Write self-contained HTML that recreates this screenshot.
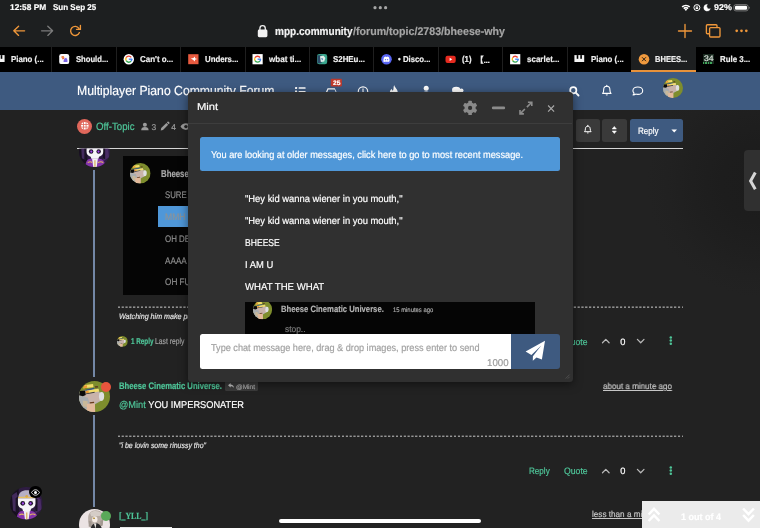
<!DOCTYPE html>
<html><head><meta charset="utf-8"><title>BHEESE WHY | Multiplayer Piano Community Forum</title>
<style>
*{box-sizing:border-box;margin:0;padding:0}
html,body{width:760px;height:528px;overflow:hidden;background:#222;font-family:"Liberation Sans",sans-serif;color:#fff}
.abs{position:absolute}
.t{position:absolute;white-space:nowrap;line-height:1;-webkit-text-stroke:.18px;transform-origin:0 0;text-rendering:geometricPrecision}
svg{position:absolute;overflow:visible}
#root{position:absolute;left:0;top:0;width:760px;height:528px;overflow:hidden;will-change:transform}
#chrome{left:0;top:0;width:760px;height:47px;background:#1d1f20}
#tabs{left:0;top:46.7px;width:760px;height:25px;background:#000}
.sep{position:absolute;top:46.7px;width:1px;height:25px;background:#1f1f1f}
#hdr{left:0;top:71.7px;width:760px;height:38.3px;background:#3e5a80}
#modal{left:187.6px;top:92.3px;width:385.2px;height:289.4px;background:#303030;border-radius:3.5px;box-shadow:0 2px 10px rgba(0,0,0,.5)}
.dash{position:absolute;height:1px;background:repeating-linear-gradient(90deg,#b4b4b4 0,#b4b4b4 1.5px,transparent 2.3px,transparent 3.3px,#b4b4b4 3.864px)}
.btn{position:absolute;top:118.6px;height:23.2px;border-radius:2.5px}
</style></head><body>
<div id="root">
<div class="abs" style="left:560px;top:72px;width:200px;height:300px;background:radial-gradient(circle at 202px 110px,#1c1c1c 0,#1d1d1d 40px,#1f1f1f 70px,#212121 95px,#222 115px)"></div>
<div class="abs" id="chrome"></div>
<div class="t" style="left:10.00px;top:3.00px;font-size:8.36px;color:#fff;font-weight:bold;">12:58 PM</div>
<div class="t" style="left:53.40px;top:3.00px;font-size:8.36px;color:#fff;font-weight:bold;transform:scaleX(0.9603);">Sun Sep 25</div>
<div class="t" style="left:713.80px;top:3.00px;font-size:8.36px;color:#fff;font-weight:bold;transform:scaleX(1.0657);">92%</div>
<svg style="left:0;top:0" width="760" height="47" viewBox="0 0 760 47">
<g fill="#a6a6a6"><circle cx="375" cy="7.7" r="1.6"/><circle cx="380.3" cy="7.7" r="1.6"/><circle cx="385.6" cy="7.7" r="1.6"/></g>
<!-- wifi -->
<g fill="none" stroke="#fff" stroke-width="1.5" stroke-linecap="butt">
<path d="M682.1 6.9 A5.6 5.6 0 0 1 689.7 6.9"/>
<path d="M683.7 8.6 A3.3 3.3 0 0 1 688.1 8.6"/>
</g><path d="M685.900 10.900l-1.300-1.400a1.800 1.800 0 0 1 2.600 0z" fill="#fff"/>
<!-- rotation lock -->
<circle cx="696.900" cy="7.600" r="3" fill="none" stroke="#fff" stroke-width="1"/>
<rect x="695.700" y="7.200" width="2.400" height="1.900" rx=".3" fill="#fff"/><path d="M696.200 7.300v-.700a.700.700 0 0 1 1.400 0v.700" fill="none" stroke="#fff" stroke-width=".6"/>
<!-- moon -->
<path d="M707.300 4.400a3.300 3.300 0 1 0 3 4.300a2.700 2.700 0 0 1-3-4.300z" fill="#fff" stroke="#fff" stroke-width=".5" stroke-linejoin="round"/>
<!-- battery -->
<rect x="733.900" y="4.600" width="14.200" height="6.300" rx="2" fill="none" stroke="#8b8b8b" stroke-width=".8"/>
<rect x="735" y="5.700" width="12" height="4.100" rx="1.100" fill="#fff"/>
<path d="M748.900 6.600v2.300c.6-.2.800-.6.800-1.150s-.2-.95-.8-1.150z" fill="#8b8b8b"/>
<!-- back / fwd / reload -->
<g fill="none" stroke="#ef973a" stroke-width="1.35" stroke-linecap="round" stroke-linejoin="round">
<path d="M24.6 30.8H13.9M18.6 26.2l-4.8 4.6 4.8 4.6"/>
<path d="M79.400 32.600A4.550 4.550 0 1 1 78.900 28.300M80.400 25.300V29.300H76.500" stroke-linejoin="miter"/>
<path d="M685 24.5v13M678.5 31h13"/>
<rect x="706.4" y="24.7" width="10.6" height="9" rx="1"/>
</g>
<rect x="709.6" y="27.6" width="10.4" height="9.4" rx="1" fill="#1d1f20" stroke="#ef973a" stroke-width="1.35"/>
<g fill="#ef973a"><circle cx="736.7" cy="30.8" r="1.35"/><circle cx="741.5" cy="30.8" r="1.35"/><circle cx="746.3" cy="30.8" r="1.35"/></g>
<path d="M41.6 30.8h10.9M47.8 26.2l4.8 4.6-4.8 4.6" fill="none" stroke="#7b7b7b" stroke-width="1.35" stroke-linecap="round" stroke-linejoin="round"/>
<!-- lock -->
<rect x="257.8" y="29.6" width="9.6" height="7.6" rx="1.4" fill="#f2f2f2"/>
<path d="M259.9 30v-1.6a2.7 2.7 0 0 1 5.4 0v1.6" fill="none" stroke="#f2f2f2" stroke-width="1.3"/>
</svg>
<div class="t" style="left:275.00px;top:27.00px;font-size:11.22px;color:#f3f3f3;font-weight:bold;transform:scaleX(0.8945);">mpp.community</div>
<div class="t" style="left:352.60px;top:27.00px;font-size:11.22px;color:#a5a5a5;font-weight:bold;transform:scaleX(0.9486);">/forum/topic/2783/bheese-why</div>
<div class="abs" id="tabs"></div>
<div class="abs" style="left:631.4px;top:46.7px;width:64.5px;height:25px;background:#1d1f20;border-bottom:2px solid #e8923a"></div>
<div class="sep" style="left:51.3px"></div><div class="sep" style="left:115.7px"></div><div class="sep" style="left:180.1px"></div><div class="sep" style="left:244.5px"></div><div class="sep" style="left:308.9px"></div><div class="sep" style="left:373.3px"></div><div class="sep" style="left:437.7px"></div><div class="sep" style="left:502.1px"></div><div class="sep" style="left:566.5px"></div>
<div class="t" style="left:11.40px;top:55.00px;font-size:8.57px;color:#f0f0f0;font-weight:bold;transform:scaleX(0.9191);">Piano (...</div>
<div class="t" style="left:75.80px;top:55.00px;font-size:8.57px;color:#f0f0f0;font-weight:bold;transform:scaleX(0.8933);">Should...</div>
<div class="t" style="left:140.20px;top:55.00px;font-size:8.57px;color:#f0f0f0;font-weight:bold;transform:scaleX(0.9271);">Can't o...</div>
<div class="t" style="left:204.60px;top:55.00px;font-size:8.57px;color:#f0f0f0;font-weight:bold;transform:scaleX(0.9143);">Unders...</div>
<div class="t" style="left:269.00px;top:55.00px;font-size:8.57px;color:#f0f0f0;font-weight:bold;transform:scaleX(0.9431);">wbat ti...</div>
<div class="t" style="left:333.40px;top:55.00px;font-size:8.57px;color:#f0f0f0;font-weight:bold;transform:scaleX(0.9209);">S2HEu...</div>
<div class="t" style="left:397.80px;top:55.00px;font-size:8.57px;color:#f0f0f0;font-weight:bold;transform:scaleX(0.9067);">• Disco...</div>
<div class="t" style="left:462.20px;top:55.00px;font-size:8.57px;color:#f0f0f0;font-weight:bold;transform:scaleX(0.9075);">(1)</div>
<div class="t" style="left:475.20px;top:56.00px;font-size:8.57px;color:#f0f0f0;font-weight:bold;font-family:'Liberation Sans','Noto Sans CJK JP',sans-serif;letter-spacing:-.3px;">【...</div>
<div class="t" style="left:526.60px;top:55.00px;font-size:8.57px;color:#f0f0f0;font-weight:bold;transform:scaleX(0.9353);">scarlet...</div>
<div class="t" style="left:591.00px;top:55.00px;font-size:8.57px;color:#f0f0f0;font-weight:bold;transform:scaleX(0.9191);">Piano (...</div>
<div class="t" style="left:655.40px;top:55.00px;font-size:8.57px;color:#f0f0f0;font-weight:bold;transform:scaleX(0.8815);">BHEES...</div>
<div class="t" style="left:719.80px;top:55.00px;font-size:8.57px;color:#f0f0f0;font-weight:bold;transform:scaleX(0.9195);">Rule 3...</div>
<svg style="left:0;top:0" width="760" height="72" viewBox="0 0 760 72">
<rect x="-5.2" y="55.100" width="9.800" height="6.900" fill="#f4f4f4"/><rect x="-2.9000000000000004" y="55.100" width="1.600" height="3.700" fill="#000"/><rect x="0.7000000000000002" y="55.100" width="1.600" height="3.700" fill="#000"/><rect x="574.4" y="55.100" width="9.800" height="6.900" fill="#f4f4f4"/><rect x="576.6999999999999" y="55.100" width="1.600" height="3.700" fill="#000"/><rect x="580.3" y="55.100" width="1.600" height="3.700" fill="#000"/><rect x="59.2" y="54.1" width="10" height="10" rx="2.2" fill="#fbfbfd"/><path d="M61.400000000000006 56.2l2.6 .2 .4 2.4-1.8 .6z" fill="#e2574c"/><path d="M63.5 61.9c0-2.4 1.2-4 2.6-4.2 1 .6 1.5 2.4 1.3 4.2z" fill="#7b63e6"/><circle cx="62.900000000000006" cy="57.2" r="1.2" fill="#f08a4a"/><circle cx="128.8" cy="59.2" r="5.2" fill="#fff"/><g fill="none" stroke-width="1.36"><path d="M131.27 57.47A3.02 3.02 0 0 0 126.19 57.69" stroke="#ea4335"/><path d="M126.19 57.69A3.02 3.02 0 0 0 126.19 60.71" stroke="#fbbc05"/><path d="M126.19 60.71A3.02 3.02 0 0 0 131.11 61.14" stroke="#34a853"/><path d="M131.11 61.14A3.02 3.02 0 0 0 131.81 59.09" stroke="#4285f4"/><path d="M128.80 59.20H132.27" stroke="#4285f4"/></g><rect x="188.20000000000002" y="54.2" width="10.3" height="10" fill="#e85a3f"/><path d="M190.8 58.6l2.6-.6 1.4-1.6 .3 1.9 2.1 .8-2.1 .7-.5 1.8-1.3-1.6z" fill="#fff"/><rect x="252.50000000000003" y="54.1" width="10.2" height="10.2" fill="#fff"/><g fill="none" stroke-width="1.33"><path d="M260.02 57.50A2.96 2.96 0 0 0 255.04 57.72" stroke="#ea4335"/><path d="M255.04 57.72A2.96 2.96 0 0 0 255.04 60.68" stroke="#fbbc05"/><path d="M255.04 60.68A2.96 2.96 0 0 0 259.87 61.10" stroke="#34a853"/><path d="M259.87 61.10A2.96 2.96 0 0 0 260.56 59.10" stroke="#4285f4"/><path d="M257.60 59.20H261.00" stroke="#4285f4"/></g><rect x="317.0" y="54.1" width="10.2" height="10.2" rx="2.3" fill="#3aa58d"/><rect x="317.4" y="55.2" width="4.3" height="8" rx="1" fill="#2c4a66"/><path d="M320.0 56.3l3.6-.6 1.8 2.4-1.2 3.4-3.4 .6z" fill="#dfeee8"/><path d="M321.0 58.2l2 .2-.6 2z" fill="#3b6fb0"/><circle cx="386.5" cy="59.2" r="5.3" fill="#5865f2"/><path d="M383.5 61.3c-.3-1.7 .2-3.3 .9-4.3 .7-.3 1.1-.4 1.6-.5l.2 .4h.6l.2-.4c.5 .1 .9 .2 1.6 .5 .7 1 1.200 2.6 .9 4.3-.6 .4-1.100 .6-1.700 .8l-.4-.6c-.9 .3-1.500 .3-2.400 0l-.4 .6c-.6-.2-1.100-.4-1.700-.8z" fill="#fff"/><circle cx="385.45" cy="59.7" r=".65" fill="#5865f2"/><circle cx="387.55" cy="59.7" r=".65" fill="#5865f2"/><rect x="445.50000000000006" y="55.7" width="10.2" height="7.2" rx="2" fill="#e62a1f"/><path d="M449.6000000000001 57.7l2.7 1.6-2.7 1.600z" fill="#fff"/><rect x="510.1" y="54.1" width="10.2" height="10.2" fill="#fff"/><g fill="none" stroke-width="1.33"><path d="M517.62 57.50A2.96 2.96 0 0 0 512.64 57.72" stroke="#ea4335"/><path d="M512.64 57.72A2.96 2.96 0 0 0 512.64 60.68" stroke="#fbbc05"/><path d="M512.64 60.68A2.96 2.96 0 0 0 517.47 61.10" stroke="#34a853"/><path d="M517.47 61.10A2.96 2.96 0 0 0 518.16 59.10" stroke="#4285f4"/><path d="M515.20 59.20H518.60" stroke="#4285f4"/></g><circle cx="644.0" cy="59.2" r="5.3" fill="#f09a3e"/><path d="M642.3 57.5l3.4 3.4M645.7 57.5l-3.4 3.4" stroke="#2a2118" stroke-width="1" stroke-linecap="round"/></svg>
<div class="abs" style="left:703.0000000000001px;top:53.6px;width:10.6px;height:10.8px;background:#1a2a20"></div><div class="t" style="left:703.50px;top:55.00px;font-size:7.96px;color:#dfe6df;transform:scaleX(1.0836);">34</div>
<div class="abs" style="left:703.4000000000001px;top:62.4px;width:9.8px;height:1.6px;background:repeating-linear-gradient(90deg,#3fa65a 0,#3fa65a 1.4px,transparent 1.4px,transparent 2.45px)"></div>
<div class="abs" id="hdr"></div>
<div class="t" style="left:77.00px;top:84.00px;font-size:13.16px;color:#fff;transform:scaleX(0.9283);">Multiplayer Piano Community Forum</div>
<svg style="left:0;top:72" width="760" height="40" viewBox="0 72 760 40">
<g fill="#fff">
<!-- list -->
<rect x="295" y="87" width="2.1" height="2" rx=".4"/><rect x="298.6" y="87.3" width="7" height="1.5" rx=".5"/>
<rect x="295" y="90.6" width="2.1" height="2" rx=".4"/><rect x="298.6" y="90.9" width="7" height="1.500" rx=".5"/>
<!-- inbox -->
<path d="M325.200 93.500l2.400-5.200h7.200l2.400 5.200v2.500h-12zM328.400 89.600l-1.700 3.800h2.900l.7 1.300h2.400l.7-1.300h2.900l-1.700-3.800z"/>
<!-- fire -->
<path d="M394.200 85c.3 2.400 3.600 4.200 3.600 7.600a4 4 0 0 1-8 0c0-1.800 1-3 2-3.900 0 1.200 .5 1.900 1.100 1.900 1-1 .3-3.500 1.300-5.600z"/>
<!-- user -->
<circle cx="426.200" cy="88.200" r="2.500"/><path d="M421.800 96c0-3 1.800-4.400 4.400-4.400s4.400 1.400 4.400 4.400z"/>
<!-- users -->
<ellipse cx="456.200" cy="90" rx="4.200" ry="3.200"/><circle cx="461.500" cy="90.600" r="2"/>
</g>
<!-- clock -->
<circle cx="363" cy="91.600" r="4.700" fill="none" stroke="#fff" stroke-width="1.200"/><path d="M363 88.600v3.300l1.700 1" fill="none" stroke="#fff" stroke-width="1.100"/>
<rect x="330.800" y="78.700" width="11.100" height="7.700" rx="1" fill="#c0392b"/>
<!-- search -->
<circle cx="573.300" cy="90.200" r="3.100" fill="none" stroke="#fff" stroke-width="1.700"/><path d="M575.700 92.700l2.800 2.800" stroke="#fff" stroke-width="1.900" stroke-linecap="round"/>
<!-- bell -->
<path d="M606.800 86.300c-2 0-3.100 1.500-3.100 3.400 0 1.800-.4 3-1.100 3.700h8.400c-.7-.7-1.100-1.900-1.100-3.700 0-1.900-1.100-3.400-3.100-3.400z" fill="none" stroke="#fff" stroke-width="1.100" stroke-linejoin="round"/><path d="M605.700 94.400a1.100 1.100 0 0 0 2.200 0z" fill="#fff"/><path d="M606.800 85.400v1" stroke="#fff" stroke-width="1.100" stroke-linecap="round"/>
<!-- comment -->
<path d="M637.800 87c2.800 0 4.900 1.600 4.900 3.700s-2.100 3.700-4.900 3.700c-.7 0-1.400-.1-2-.3-.8 .6-1.700 .9-2.700 .9 .6-.6 .9-1.200 1-1.900-.8-.6-1.200-1.500-1.200-2.400 0-2.100 2.100-3.700 4.900-3.700z" fill="none" stroke="#fff" stroke-width="1.100" stroke-linejoin="round"/>
</svg>
<div class="t" style="left:332.60px;top:81.00px;font-size:6.53px;color:#fff;font-weight:bold;transform:scaleX(1.0207);">25</div>
<div class="abs" style="left:77px;top:118.500px;width:15px;height:15px;border-radius:50%;background:#e0675b"></div>
<svg style="left:80.700px;top:122.200px" width="7.600" height="7.600" viewBox="0 0 16 16"><circle cx="8" cy="8" r="8" fill="#fff"/><g stroke="#e0675b" stroke-width="1.700" fill="none"><path d="M0 5.300h16M0 10.700h16M5.300 0v16M10.700 0v16"/></g></svg>
<div class="t" style="left:95.70px;top:122.00px;font-size:10.51px;color:#4fc79a;transform:scaleX(0.9228);">Off-Topic</div>
<svg style="left:0;top:110px" width="760" height="45" viewBox="0 110 760 45">
<g fill="#9b9b9b"><circle cx="144.900" cy="124.800" r="2"/><path d="M141.200 130.300c0-2.200 1.300-3.200 3.700-3.200s3.700 1 3.700 3.200z"/>
<path d="M160.700 130.400l.5-2.300 5.200-5.200 1.800 1.800-5.200 5.200zM166.900 122.400l.7-.7c.3-.3.700-.3 1 0l.8.800c.3.300.3.700 0 1l-.7.700z"/>
<path d="M180.500 126.600c1.400-2.200 3.300-3.300 5.400-3.300s4 1.100 5.400 3.300c-1.400 2.200-3.300 3.300-5.400 3.300s-4-1.100-5.400-3.300z"/></g>
<circle cx="185.900" cy="126.600" r="1.700" fill="#222"/>
</svg>
<div class="t" style="left:151.50px;top:123.00px;font-size:8.47px;color:#9b9b9b;">3</div>
<div class="t" style="left:171.20px;top:123.00px;font-size:8.47px;color:#9b9b9b;">4</div>
<div class="btn" style="left:575.500px;width:24.600px;background:#3a3a3a"></div><div class="btn" style="left:602px;width:24.600px;background:#3a3a3a"></div><div class="btn" style="left:630.100px;width:52.800px;background:#3e5a80"></div>
<svg style="left:0;top:110px" width="760" height="45" viewBox="0 110 760 45">
<path d="M587.800 126.200c-1.500 0-2.400 1.100-2.400 2.600 0 1.400-.3 2.300-.9 2.900h6.600c-.6-.6-.9-1.500-.9-2.900 0-1.500-.9-2.600-2.400-2.600z" fill="none" stroke="#fff" stroke-width="1"/><path d="M586.900 132.600a.9.900 0 0 0 1.800 0z" fill="#fff"/><path d="M587.800 125.300v.9" stroke="#fff" stroke-width="1" stroke-linecap="round"/>
<path d="M612.200 129l2.100-2.600 2.100 2.600zM612.200 131l2.100 2.600 2.100-2.600z" fill="#fff" stroke="#fff" stroke-width=".5" stroke-linejoin="round"/>
<path d="M671.400 129.600h5.600l-2.800 3z" fill="#fff"/>
</svg>
<div class="t" style="left:637.60px;top:127.00px;font-size:9.28px;color:#fff;transform:scaleX(0.8691);">Reply</div>
<div class="abs" style="left:77px;top:148px;width:606px;height:1px;background:#d6d6d6"></div>
<svg style="left:78.50px;top:136.00px" width="31.00" height="31.00" viewBox="0 0 32 32"><clipPath id="cm1"><circle cx="16" cy="16" r="16"/></clipPath><clipPath id="co1"><path d="M0 13.100h32V32H0z"/></clipPath><g clip-path="url(#co1)"><g clip-path="url(#cm1)">
<rect width="32" height="32" fill="#2e1c42"/>
<path d="M0 0h8.500v32H0z" fill="#17101e"/><path d="M2 8l4.500-3 1.500 6-1 14-4-2z" fill="#432a5c"/>
<path d="M25 8l5 4 1 10-6 4z" fill="#4a2c66"/>
<path d="M5.500 11l2.500-2v15l-2.500 1zM24.800 10l2.200 2v12l-2.200-1z" fill="#1b1226"/>
<path d="M8.300 10c0-4.200 3.600-6.700 8.100-6.700s8 2.500 8.300 6.700z" fill="#b6afc6"/>
<path d="M8 9.600h16.800v1.500H8z" fill="#e6c062"/><circle cx="16.400" cy="9.200" r="1.300" fill="#d9a84a"/>
<path d="M7.800 11h17.200v5.500c0 2.500-1.900 4.200-4.300 4.800l-.8 2.800h-7l-.8-2.800c-2.400-.6-4.300-2.300-4.300-4.800z" fill="#f5f3f7"/>
<circle cx="12.500" cy="16" r="2.300" fill="#21142e"/><circle cx="20.300" cy="16" r="2.300" fill="#21142e"/>
<circle cx="12.700" cy="16.100" r="1.100" fill="#a545f2"/><circle cx="20.100" cy="16.100" r="1.100" fill="#a545f2"/>
<path d="M6.500 32c0-5 2-8.500 5.500-8.500h9c3.500 0 6 3.500 6.500 8.500z" fill="#8434ab"/>
<path d="M13.500 23.500h6l-1.200 8.500h-3.600z" fill="#f0eef2"/>
<path d="M9 27.500c2-1.200 3.500-1.200 4.500 0M19.500 27.500c2-1.200 4-1.200 5.500 0" fill="none" stroke="#e0b860" stroke-width="1.100"/>
<rect x="15.800" y="25" width="1.300" height="7" fill="#d9b060"/>
</g></g></svg>
<div class="abs" style="left:93px;top:169.500px;width:2.400px;height:207.700px;background:#7387a6"></div><div class="abs" style="left:93px;top:414.600px;width:2.400px;height:92px;background:#7387a6"></div>
<div class="abs" style="left:123px;top:156.200px;width:200px;height:138.800px;background:#050505"></div>
<svg style="left:129.50px;top:163.10px" width="20.60" height="20.60" viewBox="0 0 32 32"><clipPath id="cb2"><circle cx="16" cy="16" r="16"/></clipPath><g clip-path="url(#cb2)">
<rect width="32" height="32" fill="#7e8d2d"/>
<path d="M0 11l6-1.500 14-1.500 1 3 1 10-5.500 3-.500 8H0z" fill="#b3b1ad"/>
<path d="M6 13l15-1.500 1 9-7 2.500-8-2z" fill="#c9b3aa"/>
<path d="M0 16l9 1 2 6-3 6-8-2z" fill="#a9adb0"/>
<path d="M4 20l5 1-1 6-4-1z" fill="#c9b99a"/>
<path d="M21 12c3-1.500 5-.5 5 3.500s-1.500 5.500-4.500 5l-1-4z" fill="#dedfe1"/>
<path d="M8.200 23.500l8.200-.5.300 9H8z" fill="#e3b99a"/>
<path d="M11 22l4.500-.6.200 1.300-4.500.6z" fill="#6b3b1b"/>
<path d="M4.300 7.500L6 4l8.500-1 .5 3.500z" fill="#f3dd6a"/>
<path d="M4.300 7.700l.700-2.700 3.200-.5.200 2.500z" fill="#ee9a35"/>
<path d="M6.500 9l9-2 .300 1.200-9 2z" fill="#2e4f8c"/>
<path d="M6.700 10.300l13.300-2.300.8 2.800L7.500 12.800z" fill="#f3dd6a"/>
<path d="M6.700 10.500l3-.6.500 2.400-3 .6z" fill="#ee9a35"/>
<path d="M16.400 5.500l3-.3.300 1.500-3 .3z" fill="#5a3a22"/>
<path d="M.5 10.300l5.800-.5.700 4.700-3 1.200-4-1z" fill="#0a0a0a"/>
<path d="M7 12.800l9-1.600.2 1-9 1.600z" fill="#3b3b3b"/>
</g></svg>
<div class="t" style="left:161.20px;top:170.00px;font-size:10.0px;color:#a9a9a9;font-weight:bold;transform:scaleX(0.7814);">Bheese</div>
<div class="t" style="left:165.00px;top:191.00px;font-size:9.59px;color:#8f8f8f;transform:scaleX(0.8150);">SURE</div>
<div class="abs" style="left:158.200px;top:205.500px;width:60px;height:21.700px;background:#4f97d8"></div>
<div class="t" style="left:165.00px;top:213.00px;font-size:9.59px;color:#8c9398;transform:scaleX(0.8962);">MMH</div>
<div class="t" style="left:165.00px;top:235.00px;font-size:9.59px;color:#8f8f8f;transform:scaleX(0.8239);">OH DE</div>
<div class="t" style="left:165.00px;top:257.00px;font-size:9.59px;color:#8f8f8f;transform:scaleX(0.8528);">AAAA</div>
<div class="t" style="left:165.00px;top:278.00px;font-size:9.59px;color:#8f8f8f;transform:scaleX(0.8558);">OH FU</div>
<div class="dash" style="left:118.200px;top:306px;width:565px;opacity:.45"></div><div class="dash" style="left:118.200px;top:307px;width:565px;opacity:.75"></div>
<div class="t" style="left:118.50px;top:313.00px;font-size:7.96px;color:#e2e2e2;font-style:italic;transform:scaleX(0.8978);">Watching him make pu</div>
<svg style="left:116.80px;top:335.50px" width="10.80" height="10.80" viewBox="0 0 32 32"><clipPath id="cb3"><circle cx="16" cy="16" r="16"/></clipPath><g clip-path="url(#cb3)">
<rect width="32" height="32" fill="#7e8d2d"/>
<path d="M0 11l6-1.500 14-1.500 1 3 1 10-5.500 3-.500 8H0z" fill="#b3b1ad"/>
<path d="M6 13l15-1.500 1 9-7 2.500-8-2z" fill="#c9b3aa"/>
<path d="M0 16l9 1 2 6-3 6-8-2z" fill="#a9adb0"/>
<path d="M4 20l5 1-1 6-4-1z" fill="#c9b99a"/>
<path d="M21 12c3-1.500 5-.5 5 3.500s-1.500 5.500-4.500 5l-1-4z" fill="#dedfe1"/>
<path d="M8.200 23.500l8.200-.5.300 9H8z" fill="#e3b99a"/>
<path d="M11 22l4.500-.6.200 1.300-4.500.6z" fill="#6b3b1b"/>
<path d="M4.300 7.500L6 4l8.500-1 .5 3.500z" fill="#f3dd6a"/>
<path d="M4.300 7.700l.700-2.700 3.200-.5.200 2.500z" fill="#ee9a35"/>
<path d="M6.500 9l9-2 .300 1.200-9 2z" fill="#2e4f8c"/>
<path d="M6.700 10.300l13.300-2.300.8 2.800L7.500 12.800z" fill="#f3dd6a"/>
<path d="M6.700 10.500l3-.6.500 2.400-3 .6z" fill="#ee9a35"/>
<path d="M16.400 5.500l3-.3.300 1.500-3 .3z" fill="#5a3a22"/>
<path d="M.5 10.300l5.800-.5.700 4.700-3 1.200-4-1z" fill="#0a0a0a"/>
<path d="M7 12.800l9-1.600.2 1-9 1.600z" fill="#3b3b3b"/>
</g></svg>
<div class="t" style="left:131.20px;top:337.00px;font-size:8.47px;color:#4fc79a;font-weight:bold;transform:scaleX(0.7469);">1 Reply</div>
<div class="t" style="left:155.30px;top:337.00px;font-size:8.47px;color:#a2a2a2;transform:scaleX(0.7980);">Last reply</div>
<div class="t" style="left:564.00px;top:338.00px;font-size:9.28px;color:#4fc79a;transform:scaleX(0.9307);">Quote</div>
<svg style="left:0;top:331.1px" width="760" height="20" viewBox="0 331.1 760 20"><g fill="none" stroke="#b9b9b9" stroke-width="1.250" stroke-linecap="round" stroke-linejoin="round"><path d="M602.500 342.90000000000003l3.300-3.400 3.300 3.400"/><path d="M637.400 339.5l3.300 3.400 3.300-3.400"/></g><g fill="#4fc79a"><circle cx="670.800" cy="337.5" r="1.250"/><circle cx="670.800" cy="340.70000000000005" r="1.250"/><circle cx="670.800" cy="343.90000000000003" r="1.250"/></g></svg>
<div class="t" style="left:620.30px;top:338.00px;font-size:9.28px;color:#fff;">0</div>
<svg style="left:78.50px;top:380.50px" width="31.00" height="31.00" viewBox="0 0 32 32"><clipPath id="cb4"><circle cx="16" cy="16" r="16"/></clipPath><g clip-path="url(#cb4)">
<rect width="32" height="32" fill="#7e8d2d"/>
<path d="M0 11l6-1.500 14-1.500 1 3 1 10-5.500 3-.500 8H0z" fill="#b3b1ad"/>
<path d="M6 13l15-1.500 1 9-7 2.500-8-2z" fill="#c9b3aa"/>
<path d="M0 16l9 1 2 6-3 6-8-2z" fill="#a9adb0"/>
<path d="M4 20l5 1-1 6-4-1z" fill="#c9b99a"/>
<path d="M21 12c3-1.500 5-.5 5 3.500s-1.500 5.500-4.500 5l-1-4z" fill="#dedfe1"/>
<path d="M8.200 23.500l8.200-.5.300 9H8z" fill="#e3b99a"/>
<path d="M11 22l4.500-.6.200 1.300-4.500.6z" fill="#6b3b1b"/>
<path d="M4.300 7.500L6 4l8.500-1 .5 3.500z" fill="#f3dd6a"/>
<path d="M4.300 7.700l.700-2.700 3.200-.5.200 2.500z" fill="#ee9a35"/>
<path d="M6.500 9l9-2 .300 1.200-9 2z" fill="#2e4f8c"/>
<path d="M6.700 10.300l13.300-2.300.8 2.800L7.500 12.800z" fill="#f3dd6a"/>
<path d="M6.700 10.500l3-.6.500 2.400-3 .6z" fill="#ee9a35"/>
<path d="M16.400 5.500l3-.3.300 1.500-3 .3z" fill="#5a3a22"/>
<path d="M.5 10.300l5.800-.5.700 4.700-3 1.200-4-1z" fill="#0a0a0a"/>
<path d="M7 12.800l9-1.600.2 1-9 1.600z" fill="#3b3b3b"/>
</g></svg>
<div class="abs" style="left:101.300px;top:381.900px;width:10px;height:10px;border-radius:50%;background:#e8553d"></div>
<div class="t" style="left:119.10px;top:382.00px;font-size:9.49px;color:#4fc79a;font-weight:bold;transform:scaleX(0.8107);">Bheese Cinematic Universe.</div>
<div class="abs" style="left:225px;top:381.200px;width:33px;height:10.200px;border-radius:1.500px;background:#3b3b3b"></div>
<svg style="left:228.300px;top:383.400px" width="6.200" height="5.600" viewBox="0 0 12 11"><path d="M5 0L0 4.500 5 9V6.200c3.500 0 5.500 1 6.800 3.800C11.500 5.500 9 3 5 2.800z" fill="#c9c9c9"/></svg>
<div class="t" style="left:236.00px;top:385.00px;font-size:6.43px;color:#a8a8a8;transform:scaleX(1.0184);">@Mint</div>
<div class="t" style="left:602.50px;top:382.00px;font-size:8.57px;color:#c6c6c6;transform:scaleX(0.9412);text-decoration:underline;text-underline-offset:1px;">about a minute ago</div>
<div class="t" style="left:119.10px;top:401.00px;font-size:9.89px;color:#fff;transform:scaleX(0.9351);"><span style="color:#4fc79a">@Mint</span> YOU IMPERSONATER</div>
<div class="dash" style="left:118.200px;top:435px;width:565px;opacity:.35"></div><div class="dash" style="left:118.200px;top:436px;width:565px;opacity:.8"></div>
<div class="t" style="left:118.80px;top:442.00px;font-size:7.96px;color:#e2e2e2;font-style:italic;transform:scaleX(0.8755);">"i be lovin some rinussy tho"</div>
<div class="t" style="left:528.80px;top:467.00px;font-size:9.28px;color:#4fc79a;transform:scaleX(0.8733);">Reply</div>
<div class="t" style="left:563.80px;top:467.00px;font-size:9.28px;color:#4fc79a;transform:scaleX(0.9386);">Quote</div>
<svg style="left:0;top:460.7px" width="760" height="20" viewBox="0 460.7 760 20"><g fill="none" stroke="#b9b9b9" stroke-width="1.250" stroke-linecap="round" stroke-linejoin="round"><path d="M602.500 472.5l3.300-3.400 3.300 3.400"/><path d="M637.400 469.09999999999997l3.300 3.400 3.300-3.400"/></g><g fill="#4fc79a"><circle cx="670.800" cy="467.09999999999997" r="1.250"/><circle cx="670.800" cy="470.3" r="1.250"/><circle cx="670.800" cy="473.5" r="1.250"/></g></svg>
<div class="t" style="left:620.30px;top:467.00px;font-size:9.28px;color:#fff;">0</div>
<svg style="left:78.50px;top:509.00px" width="31.00" height="31.00" viewBox="0 0 32 32"><clipPath id="cy5"><circle cx="16" cy="16" r="16"/></clipPath><g clip-path="url(#cy5)">
<rect width="32" height="32" fill="#ebe3e3"/>
<path d="M9.400 9.500c0-5.500 3.300-8.300 7.800-8.300s8 2.800 8 8c0 3-.8 6-2 8.500l-11.500.5c-1.700-2.300-2.300-5.200-2.300-8.700z" fill="#b7aca4"/>
<path d="M11.500 4c2.800-2.600 8.500-2.600 11.500 .2l-1.500 3-9 .3z" fill="#d5cdc7"/>
<path d="M10 12l3 1v6l-3-1zM22 12l3-1-.5 6-2.500 1z" fill="#a29890"/>
<ellipse cx="16.300" cy="10.700" rx="2.800" ry="3.300" fill="#f4ebe4"/>
<path d="M14.300 8.800l2.300 .3-.2 1.300-2.100-.3z" fill="#b08f3a"/>
<path d="M10.600 32c0-9.500 1.400-17.300 6.900-17.300s8 7.800 8 17.300z" fill="#2a2a2b"/>
<path d="M15.300 14.800l2.600 .1-.8 5.500z" fill="#e9e4e0"/>
</g></svg>
<div class="abs" style="left:101.100px;top:511.100px;width:10.200px;height:10.200px;border-radius:50%;background:#5aa959"></div>
<div class="t" style="left:119.20px;top:512.00px;font-size:9.59px;color:#4fc79a;font-weight:bold;font-family:'Liberation Serif',serif;transform:scaleX(0.8133);">[_YLL_]</div>
<div class="t" style="left:591.50px;top:510.00px;font-size:8.57px;color:#c6c6c6;transform:scaleX(0.9518);text-decoration:underline;text-underline-offset:1px;">less than a minute ago</div>
<div class="abs" style="left:120px;top:527px;width:51.500px;height:1px;background:#e8e8e8"></div>
<div class="abs" id="modal"></div>
<div class="abs" style="left:187.700px;top:123px;width:384.800px;height:1px;background:#3d3d3d"></div>
<div class="t" style="left:197.00px;top:103.00px;font-size:10.0px;color:#fff;transform:scaleX(1.1213);">Mint</div>
<svg style="left:0;top:92px" width="760" height="35" viewBox="0 92 760 35">
<!-- gear -->
<g transform="translate(470.100 107.900)"><g fill="#8a8a8a">
<circle r="5.600"/>
<rect x="-1.800" y="-7.200" width="3.600" height="14.400" rx=".7"/>
<rect x="-1.800" y="-7.200" width="3.600" height="14.400" rx=".7" transform="rotate(60)"/>
<rect x="-1.800" y="-7.200" width="3.600" height="14.400" rx=".7" transform="rotate(120)"/>
</g><circle r="2.100" fill="#303030"/></g>
<rect x="491.900" y="106.600" width="13.200" height="2.700" rx="1.200" fill="#8c8c8c"/>
<g fill="none" stroke="#8c8c8c" stroke-width="1.600" stroke-linejoin="miter"><path d="M527.900 102.200H531.800V106.100M531.500 102.500L526.900 107.100M520 110V113.900H523.900M520.300 113.600L524.900 109"/></g>
<path d="M548.100 105.500l6 6.200M554.100 105.500l-6 6.200" stroke="#a9a9a9" stroke-width="1.100" fill="none"/>
</svg>
<div class="abs" style="left:200px;top:137.300px;width:360px;height:33.700px;background:#4f97d8;border-radius:2.500px"></div>
<div class="t" style="left:211.00px;top:151.00px;font-size:9.89px;color:#fff;transform:scaleX(0.9344);">You are looking at older messages, click here to go to most recent message.</div>
<div class="t" style="left:245.00px;top:195.00px;font-size:9.89px;color:#fff;transform:scaleX(0.9508);">"Hey kid wanna wiener in you mouth,"</div>
<div class="t" style="left:245.00px;top:217.00px;font-size:9.89px;color:#fff;transform:scaleX(0.9508);">"Hey kid wanna wiener in you mouth,"</div>
<div class="t" style="left:245.30px;top:239.00px;font-size:9.89px;color:#fff;transform:scaleX(0.8683);">BHEESE</div>
<div class="t" style="left:245.30px;top:261.00px;font-size:9.89px;color:#fff;transform:scaleX(0.9514);">I AM U</div>
<div class="t" style="left:245.30px;top:283.00px;font-size:9.89px;color:#fff;transform:scaleX(0.9710);">WHAT THE WHAT</div>
<div class="abs" style="left:245px;top:301.800px;width:290.400px;height:33px;background:#050505;overflow:hidden">
<svg style="left:7.50px;top:-1.50px" width="19.20" height="19.20" viewBox="0 0 32 32"><clipPath id="cb51"><circle cx="16" cy="16" r="16"/></clipPath><g clip-path="url(#cb51)">
<rect width="32" height="32" fill="#7e8d2d"/>
<path d="M0 11l6-1.500 14-1.500 1 3 1 10-5.500 3-.500 8H0z" fill="#b3b1ad"/>
<path d="M6 13l15-1.500 1 9-7 2.500-8-2z" fill="#c9b3aa"/>
<path d="M0 16l9 1 2 6-3 6-8-2z" fill="#a9adb0"/>
<path d="M4 20l5 1-1 6-4-1z" fill="#c9b99a"/>
<path d="M21 12c3-1.500 5-.5 5 3.500s-1.500 5.500-4.500 5l-1-4z" fill="#dedfe1"/>
<path d="M8.200 23.500l8.200-.5.300 9H8z" fill="#e3b99a"/>
<path d="M11 22l4.500-.6.200 1.300-4.500.6z" fill="#6b3b1b"/>
<path d="M4.300 7.500L6 4l8.500-1 .5 3.500z" fill="#f3dd6a"/>
<path d="M4.300 7.700l.700-2.700 3.200-.5.200 2.500z" fill="#ee9a35"/>
<path d="M6.500 9l9-2 .300 1.200-9 2z" fill="#2e4f8c"/>
<path d="M6.700 10.300l13.300-2.300.8 2.800L7.500 12.800z" fill="#f3dd6a"/>
<path d="M6.700 10.500l3-.6.500 2.400-3 .6z" fill="#ee9a35"/>
<path d="M16.400 5.500l3-.3.300 1.500-3 .3z" fill="#5a3a22"/>
<path d="M.5 10.300l5.800-.5.700 4.700-3 1.200-4-1z" fill="#0a0a0a"/>
<path d="M7 12.800l9-1.600.2 1-9 1.600z" fill="#3b3b3b"/>
</g></svg>
</div>
<div class="t" style="left:281.00px;top:305.00px;font-size:9.08px;color:#b3b3b3;font-weight:bold;transform:scaleX(0.8453);">Bheese Cinematic Universe.</div>
<div class="t" style="left:392.50px;top:308.00px;font-size:6.63px;color:#a9a9a9;transform:scaleX(0.8872);">15 minutes ago</div>
<div class="t" style="left:285.00px;top:325.00px;font-size:8.77px;color:#7d7d7d;transform:scaleX(0.9556);">stop..</div>
<div class="abs" style="left:200px;top:333.500px;width:311.500px;height:35.200px;background:#fff;border-radius:2.500px 0 0 2.500px"></div>
<div class="abs" style="left:511.400px;top:333.500px;width:48.300px;height:35.200px;background:#3e5a80;border-radius:0 3px 3px 0"></div>
<div class="t" style="left:210.80px;top:344.00px;font-size:9.89px;color:#a0a0a0;transform:scaleX(0.9264);">Type chat message here, drag &amp; drop images, press enter to send</div>
<div class="t" style="left:487.20px;top:359.00px;font-size:9.89px;color:#9a9a9a;transform:scaleX(0.9832);">1000</div>
<svg style="left:525px;top:340px" width="22" height="22" viewBox="525 340 22 22">
<path d="M545 340.700L525.600 351.600L531.400 354.900L541.300 345.400L532.900 356.200L532.800 360.700L536.500 357.400L541.900 359.500Z" fill="#fff"/>
</svg>
<svg style="left:565px;top:374px" width="5" height="5" viewBox="0 0 5 5"><path d="M4.600 .6L.6 4.600M4.600 2.800L2.800 4.600" stroke="#505050" stroke-width=".9" fill="none"/></svg>
<div class="abs" style="left:744.400px;top:149.800px;width:20px;height:61.400px;background:#303030;border-radius:4px"></div>
<svg style="left:748px;top:170px" width="10" height="22" viewBox="748 170 10 22"><path d="M755.300 172.600l-4.700 8.300 4.700 8.300" fill="none" stroke="#d6d6d6" stroke-width="3" stroke-linejoin="miter"/></svg>
<svg style="left:9.70px;top:486.70px" width="32.60" height="32.60" viewBox="0 0 32 32"><clipPath id="cm52"><circle cx="16" cy="16" r="16"/></clipPath><g clip-path="url(#cm52)">
<rect width="32" height="32" fill="#2e1c42"/>
<path d="M0 0h8.500v32H0z" fill="#17101e"/><path d="M2 8l4.500-3 1.500 6-1 14-4-2z" fill="#432a5c"/>
<path d="M25 8l5 4 1 10-6 4z" fill="#4a2c66"/>
<path d="M5.500 11l2.500-2v15l-2.500 1zM24.800 10l2.200 2v12l-2.200-1z" fill="#1b1226"/>
<path d="M8.300 10c0-4.200 3.600-6.700 8.100-6.700s8 2.500 8.300 6.700z" fill="#b6afc6"/>
<path d="M8 9.600h16.800v1.500H8z" fill="#e6c062"/><circle cx="16.400" cy="9.200" r="1.300" fill="#d9a84a"/>
<path d="M7.800 11h17.200v5.500c0 2.500-1.900 4.200-4.300 4.800l-.8 2.800h-7l-.8-2.800c-2.400-.6-4.300-2.300-4.300-4.800z" fill="#f5f3f7"/>
<circle cx="12.500" cy="16" r="2.300" fill="#21142e"/><circle cx="20.300" cy="16" r="2.300" fill="#21142e"/>
<circle cx="12.700" cy="16.100" r="1.100" fill="#a545f2"/><circle cx="20.100" cy="16.100" r="1.100" fill="#a545f2"/>
<path d="M6.500 32c0-5 2-8.500 5.500-8.500h9c3.500 0 6 3.500 6.500 8.500z" fill="#8434ab"/>
<path d="M13.500 23.500h6l-1.200 8.500h-3.600z" fill="#f0eef2"/>
<path d="M9 27.500c2-1.200 3.500-1.200 4.500 0M19.500 27.500c2-1.200 4-1.200 5.500 0" fill="none" stroke="#e0b860" stroke-width="1.100"/>
<rect x="15.800" y="25" width="1.300" height="7" fill="#d9b060"/>
</g></svg>
<div class="abs" style="left:29.400px;top:486.200px;width:12.200px;height:12.200px;border-radius:50%;background:#000"></div>
<svg style="left:31px;top:489px" width="9" height="7" viewBox="0 0 18 14"><path d="M1 7c2.200-3.600 5-5.400 8-5.400S14.800 3.400 17 7c-2.200 3.600-5 5.400-8 5.400S3.200 10.600 1 7z" fill="none" stroke="#fff" stroke-width="1.700"/><circle cx="9" cy="7" r="3" fill="#fff"/></svg>
<div class="abs" style="left:642px;top:501px;width:118px;height:27px;background:#ebebeb"></div>
<div class="t" style="left:680.80px;top:513.00px;font-size:9.38px;color:#fff;font-weight:bold;transform:scaleX(0.9599);">1 out of 4</div>
<svg style="left:642px;top:501px" width="118" height="27" viewBox="642 501 118 27"><g fill="none" stroke="#fff" stroke-width="2.500" stroke-linejoin="miter">
<path d="M648.600 514.500l5.400-5.600 5.400 5.600M648.600 521l5.400-5.600 5.400 5.600"/>
<path d="M743.100 508.500l5.400 5.600 5.400-5.600M743.100 515l5.400 5.600 5.400-5.600"/>
</g></svg>
<svg style="left:663.00px;top:77.70px" width="20.00" height="20.00" viewBox="0 0 32 32"><clipPath id="cb53"><circle cx="16" cy="16" r="16"/></clipPath><g clip-path="url(#cb53)">
<rect width="32" height="32" fill="#7e8d2d"/>
<path d="M0 11l6-1.500 14-1.500 1 3 1 10-5.500 3-.500 8H0z" fill="#b3b1ad"/>
<path d="M6 13l15-1.500 1 9-7 2.500-8-2z" fill="#c9b3aa"/>
<path d="M0 16l9 1 2 6-3 6-8-2z" fill="#a9adb0"/>
<path d="M4 20l5 1-1 6-4-1z" fill="#c9b99a"/>
<path d="M21 12c3-1.500 5-.5 5 3.500s-1.500 5.500-4.500 5l-1-4z" fill="#dedfe1"/>
<path d="M8.200 23.500l8.200-.5.300 9H8z" fill="#e3b99a"/>
<path d="M11 22l4.500-.6.200 1.300-4.500.6z" fill="#6b3b1b"/>
<path d="M4.300 7.500L6 4l8.500-1 .5 3.500z" fill="#f3dd6a"/>
<path d="M4.300 7.700l.700-2.700 3.200-.5.200 2.500z" fill="#ee9a35"/>
<path d="M6.500 9l9-2 .300 1.200-9 2z" fill="#2e4f8c"/>
<path d="M6.700 10.300l13.300-2.300.8 2.800L7.500 12.800z" fill="#f3dd6a"/>
<path d="M6.700 10.500l3-.6.500 2.400-3 .6z" fill="#ee9a35"/>
<path d="M16.400 5.500l3-.3.300 1.500-3 .3z" fill="#5a3a22"/>
<path d="M.5 10.300l5.800-.5.700 4.700-3 1.200-4-1z" fill="#0a0a0a"/>
<path d="M7 12.800l9-1.600.2 1-9 1.600z" fill="#3b3b3b"/>
</g></svg>
<div class="abs" style="left:279px;top:519.300px;width:201.500px;height:3.700px;border-radius:2px;background:#fff"></div>
</div>
</body></html>
